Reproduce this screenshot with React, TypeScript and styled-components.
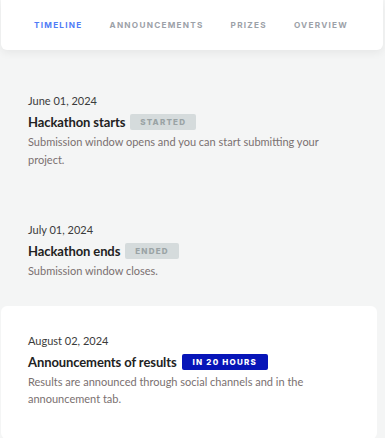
import React from "react";
import styled, { createGlobalStyle } from "styled-components";

const Global = createGlobalStyle`
  html, body { margin: 0; padding: 0; background: #f4f5f5; }
  body { font-family: "Lato", "Noto Sans", sans-serif; }
`;

const Page = styled.div`
  width: 385px;
  height: 438px;
  overflow: hidden;
  background: #f4f5f5;
  display: flex;
  flex-direction: column;
`;

const TabBar = styled.nav`
  flex-shrink: 0;
  margin: 0 2px 0 1px;
  height: 50px;
  background: #fff;
  border-radius: 0 0 6px 6px;
  box-shadow: 0 3px 8px rgba(0, 0, 0, 0.06);
  display: flex;
  align-items: center;
  gap: 27px;
  padding: 0 0 0 33px;
  box-sizing: border-box;
`;

const Tab = styled.span<{ $active?: boolean }>`
  font-family: "Inter", sans-serif;
  font-weight: 700;
  font-size: 8.2px;
  letter-spacing: 1.25px;
  color: ${(p) => (p.$active ? "#4f7cf6" : "#9ca1a8")};
`;

const List = styled.div`
  flex-shrink: 0;
  display: flex;
  flex-direction: column;
  padding-top: 44px;
`;

const Item = styled.section<{ $highlight?: boolean }>`
  display: flex;
  flex-direction: column;
  padding: ${(p) => (p.$highlight ? "28px 27px 31px" : "0 28px")};
  margin: ${(p) => (p.$highlight ? "0 8px 0 1px" : "0")};
  background: ${(p) => (p.$highlight ? "#fff" : "transparent")};
  border-radius: 6px;
`;

const DateText = styled.div`
  font-size: 11px;
  color: #3b3b3b;
  line-height: 14px;
`;

const TitleRow = styled.div`
  display: flex;
  align-items: center;
  gap: 5px;
  margin-top: 5px;
`;

const Title = styled.div`
  font-size: 13px;
  font-weight: 700;
  color: #222;
  line-height: 18px;
  letter-spacing: -0.1px;
`;

const Badge = styled.span<{ $variant: "muted" | "primary" }>`
  font-family: "Inter", sans-serif;
  font-weight: 800;
  font-size: 8px;
  letter-spacing: 1.2px;
  height: 16px;
  display: inline-flex;
  align-items: center;
  padding: 0 ${(p) => (p.$variant === "primary" ? "11px" : "10px")};
  border-radius: 2px;
  background: ${(p) => (p.$variant === "primary" ? "#0715b8" : "#d5dbdc")};
  color: ${(p) => (p.$variant === "primary" ? "#fff" : "#9aa3a5")};
`;

const Desc = styled.p`
  margin: 2px 0 0;
  font-size: 11px;
  line-height: 17.5px;
  color: #7a7070;
  max-width: 300px;
`;

const Spacer = styled.div<{ $h: number }>`
  height: ${(p) => p.$h}px;
`;

export default function App() {
  return (
    <Page>
      <Global />
      <TabBar>
        <Tab $active>TIMELINE</Tab>
        <Tab>ANNOUNCEMENTS</Tab>
        <Tab>PRIZES</Tab>
        <Tab>OVERVIEW</Tab>
      </TabBar>
      <List>
        <Item>
          <DateText>June 01, 2024</DateText>
          <TitleRow>
            <Title>Hackathon starts</Title>
            <Badge $variant="muted">STARTED</Badge>
          </TitleRow>
          <Desc>Submission window opens and you can start submitting your project.</Desc>
        </Item>
        <Spacer $h={55} />
        <Item>
          <DateText>July 01, 2024</DateText>
          <TitleRow>
            <Title>Hackathon ends</Title>
            <Badge $variant="muted">ENDED</Badge>
          </TitleRow>
          <Desc>Submission window closes.</Desc>
        </Item>
        <Spacer $h={26} />
        <Item $highlight>
          <DateText>August 02, 2024</DateText>
          <TitleRow>
            <Title>Announcements of results</Title>
            <Badge $variant="primary">IN 20 HOURS</Badge>
          </TitleRow>
          <Desc>Results are announced through social channels and in the announcement tab.</Desc>
        </Item>
      </List>
    </Page>
  );
}
